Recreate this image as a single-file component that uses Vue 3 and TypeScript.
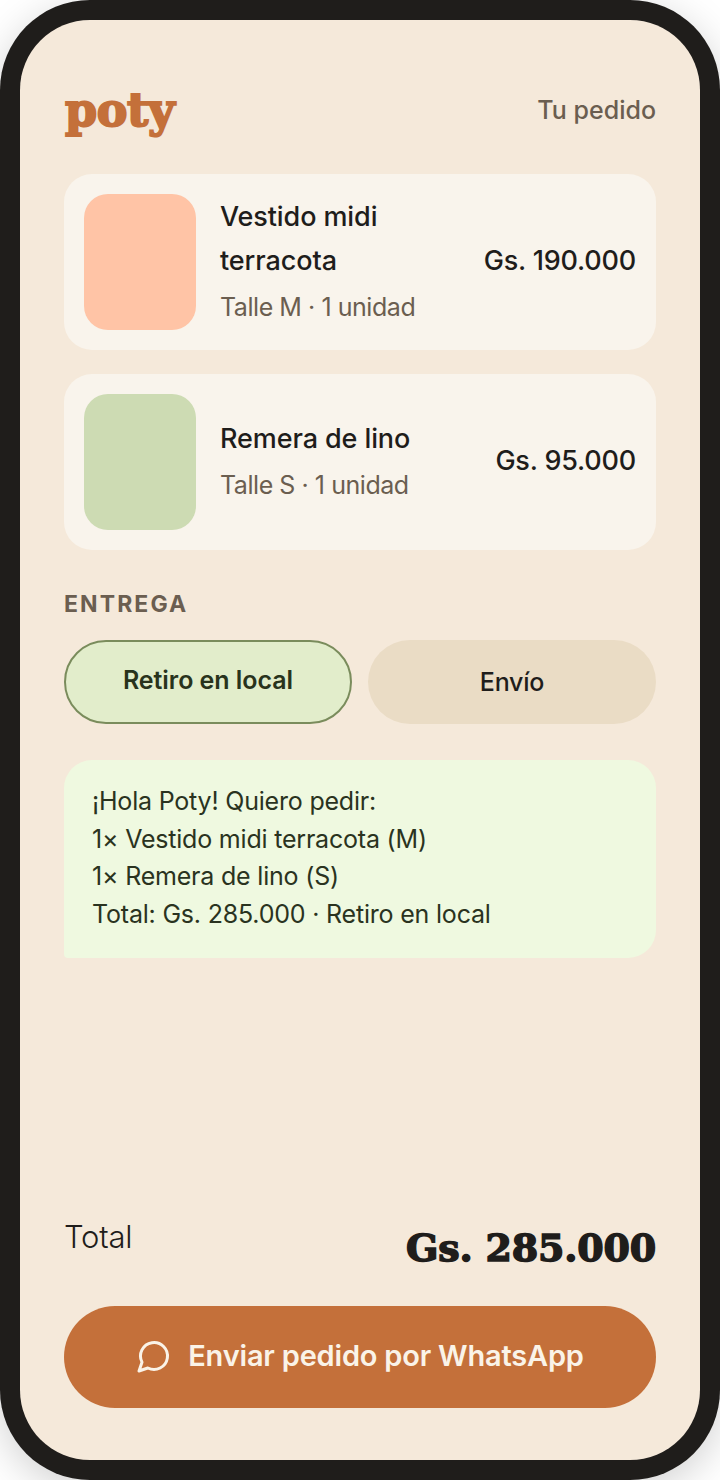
<template>
  <div class="phone">
    <div class="screen">
      <header class="top">
        <span class="logo">poty</span>
        <span class="top-label">Tu pedido</span>
      </header>

      <div class="item" v-for="item in items" :key="item.name">
        <div class="thumb" :style="{ background: item.color }"></div>
        <div class="info">
          <div class="name">{{ item.name }}</div>
          <div class="meta">{{ item.meta }}</div>
        </div>
        <div class="price">{{ item.price }}</div>
      </div>

      <div class="section-label">ENTREGA</div>
      <div class="options">
        <div class="option option--on">Retiro en local</div>
        <div class="option">Envío</div>
      </div>

      <div class="message">
        <div v-for="line in lines" :key="line">{{ line }}</div>
      </div>

      <div class="total">
        <span class="total-label">Total</span>
        <span class="total-value">Gs. 285.000</span>
      </div>

      <div class="send">
        <svg class="send-icon" viewBox="0 0 24 24" fill="none" stroke="currentColor" stroke-width="2" stroke-linecap="round" stroke-linejoin="round">
          <path d="M7.9 20A9 9 0 1 0 4 16.1L2 22Z" />
        </svg>
        <span>Enviar pedido por WhatsApp</span>
      </div>
    </div>
  </div>
</template>

<script setup lang="ts">
interface Item {
  name: string
  meta: string
  price: string
  color: string
}

const items: Item[] = [
  { name: 'Vestido midi terracota', meta: 'Talle M · 1 unidad', price: 'Gs. 190.000', color: '#ffc4a6' },
  { name: 'Remera de lino', meta: 'Talle S · 1 unidad', price: 'Gs. 95.000', color: '#cddbb3' },
]

const lines = [
  '¡Hola Poty! Quiero pedir:',
  '1× Vestido midi terracota (M)',
  '1× Remera de lino (S)',
  'Total: Gs. 285.000 · Retiro en local',
]
</script>

<style>
body {
  background: #fff;
}
</style>

<style scoped>
.phone {
  width: 720px;
  height: 1480px;
  box-sizing: border-box;
  padding: 20px;
  background: #1f1d1b;
  border-radius: 90px;
  box-shadow: 0 10px 40px rgba(0, 0, 0, 0.18);
  font-family: Inter, "Noto Sans", sans-serif;
}
.screen {
  height: 100%;
  box-sizing: border-box;
  padding: 68px 44px 52px;
  background: #f5e9da;
  border-radius: 70px;
  display: flex;
  flex-direction: column;
  color: #1f1d1b;
}
.top {
  display: flex;
  justify-content: space-between;
  align-items: center;
  height: 44px;
  margin-bottom: 42px;
}
.logo {
  font-family: "DejaVu Serif", serif;
  font-weight: 700;
  font-size: 46px;
  line-height: 42px;
  letter-spacing: -0.4px;
  margin-left: 1px;
  color: #c4703a;
  -webkit-text-stroke: 2px #c4703a;
}
.top-label {
  font-size: 25px;
  font-weight: 500;
  letter-spacing: 0;
  color: #6b5e50;
}
.item {
  height: 176px;
  box-sizing: border-box;
  padding: 20px;
  margin-bottom: 24px;
  background: #f9f4ec;
  border-radius: 28px;
  display: flex;
  align-items: center;
  gap: 24px;
}
.thumb {
  width: 112px;
  height: 136px;
  flex: none;
  border-radius: 24px;
}
.info {
  flex: 1;
  min-width: 0;
  margin-bottom: 4px;
}
.name {
  width: 204px;
  font-size: 27px;
  font-weight: 500;
  letter-spacing: -0.1px;
  line-height: 44px;
}
.meta {
  font-size: 25px;
  line-height: 36px;
  margin-top: 6px;
  letter-spacing: -0.45px;
  color: #6b5e50;
}
.price {
  font-size: 27px;
  font-weight: 500;
  letter-spacing: -0.2px;
  white-space: nowrap;
  margin-bottom: 4px;
}
.section-label {
  margin-top: 16px;
  font-size: 23px;
  font-weight: 700;
  letter-spacing: 2.1px;
  line-height: 28px;
  color: #6b5e50;
}
.options {
  display: grid;
  grid-template-columns: 1fr 1fr;
  gap: 16px;
  margin-top: 22px;
}
.option {
  height: 84px;
  box-sizing: border-box;
  border-radius: 42px;
  background: #eadcc5;
  font-size: 25px;
  font-weight: 500;
  letter-spacing: -0.2px;
  display: flex;
  align-items: center;
  justify-content: center;
}
.option--on {
  background: #e2edcb;
  border: 2px solid #7a8c5c;
  padding-bottom: 4px;
  font-weight: 600;
  letter-spacing: -0.05px;
  color: #28331c;
}
.message {
  margin-top: 36px;
  height: 198px;
  box-sizing: border-box;
  padding: 23px 28px;
  background: #eff9e0;
  border-radius: 28px 28px 28px 4px;
  font-size: 25px;
  line-height: 37.5px;
  letter-spacing: -0.2px;
  color: #2a3320;
}
.total {
  margin-top: auto;
  display: flex;
  justify-content: space-between;
  align-items: flex-start;
}
.total-label {
  font-size: 31px;
  font-weight: 300;
  line-height: 34px;
  letter-spacing: -0.2px;
}
.total-value {
  font-family: "DejaVu Serif", serif;
  font-weight: 700;
  font-size: 38px;
  line-height: 48px;
  margin-top: 4px;
  letter-spacing: -0.2px;
  -webkit-text-stroke: 1.5px #1f1d1b;
}
.send {
  margin-top: 34px;
  height: 102px;
  box-sizing: border-box;
  padding-bottom: 3px;
  border-radius: 51px;
  background: #c4703a;
  color: #faf3e8;
  font-size: 29px;
  font-weight: 600;
  letter-spacing: -0.2px;
  display: flex;
  align-items: center;
  justify-content: center;
  gap: 16px;
}
.send-icon {
  width: 36px;
  height: 36px;
}
</style>
